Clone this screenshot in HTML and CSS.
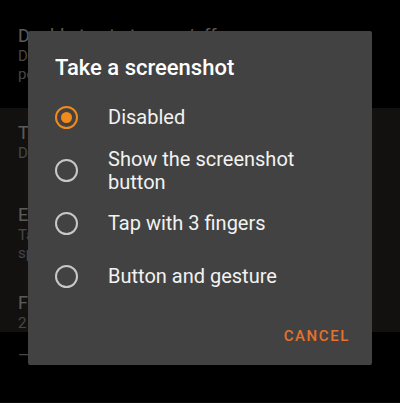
FILE: index.html
```html
<!DOCTYPE html>
<html lang="en">
<head>
    <meta charset="UTF-8">
    <meta name="viewport" content="width=device-width, initial-scale=1.0">
    <title>Take a screenshot</title>
    <link rel="stylesheet" href="styles.css">
</head>
<body>
    <div class="screen">
        <div class="setting setting-top">
            <div class="setting-title">Double-tap to turn on/off</div>
            <div class="setting-sub">Double-tap</div>
            <div class="setting-sub">persistently</div>
        </div>

        <div class="group">
            <div class="setting">
                <div class="setting-title">Take a screenshot</div>
                <div class="setting-sub">Disabled</div>
            </div>
            <div class="setting setting-tall">
                <div class="setting-title">Edge gestures</div>
                <div class="setting-sub">Tap and slide</div>
                <div class="setting-sub">special actions</div>
            </div>
            <div class="setting">
                <div class="setting-title">Floating ball</div>
                <div class="setting-sub">2 actions</div>
            </div>
        </div>

        <div class="setting setting-last">
            <div class="setting-sub">—</div>
        </div>
    </div>

    <div class="scrim"></div>

    <div class="dialog">
        <h2>Take a screenshot</h2>
        <div class="options">
            <label class="option">
                <span class="radio checked"></span>
                <span class="option-text">Disabled</span>
            </label>
            <label class="option">
                <span class="radio"></span>
                <span class="option-text">Show the screenshot button</span>
            </label>
            <label class="option">
                <span class="radio"></span>
                <span class="option-text">Tap with 3 fingers</span>
            </label>
            <label class="option">
                <span class="radio"></span>
                <span class="option-text">Button and gesture</span>
            </label>
        </div>
        <div class="actions">
            <button class="btn-cancel">CANCEL</button>
        </div>
    </div>
</body>
</html>
```

FILE: styles.css
```css
body {
    margin: 0;
    padding: 0;
    background-color: #000;
    font-family: Roboto, "Noto Sans", sans-serif;
    overflow: hidden;
}
.screen {
    height: 403px;
    border-bottom: 1px solid #1c1c1c;
    box-sizing: border-box;
}
.setting {
    padding: 14px 0 0 18px;
    height: 82px;
    box-sizing: border-box;
    overflow: hidden;
    white-space: nowrap;
}
.setting-top {
    padding-top: 25px;
    height: 108px;
}
.setting-tall {
    height: 88px;
}
.setting-title {
    color: #e2e2e2;
    font-size: 18px;
    line-height: 22px;
}
.setting-sub {
    color: #b0b0b0;
    font-size: 15px;
    line-height: 18px;
}
.group {
    background-color: #2f2c2a;
    height: 224px;
}
.setting-last {
    padding-top: 14px;
    height: 60px;
}
.scrim {
    position: absolute;
    inset: 0;
    background: rgba(0, 0, 0, 0.6);
}
.dialog {
    position: absolute;
    left: 28px;
    top: 31px;
    width: 344px;
    height: 334px;
    box-sizing: border-box;
    background-color: #424242;
    border-radius: 2px;
    padding: 24px 22px 0 27px;
    display: flex;
    flex-direction: column;
}
.dialog h2 {
    margin: 0;
    color: #fff;
    font-size: 22px;
    font-weight: 500;
    line-height: 26px;
    padding-bottom: 10px;
}
.options {
    display: flex;
    flex-direction: column;
}
.option {
    display: flex;
    align-items: center;
    gap: 30px;
    min-height: 53px;
}
.radio {
    flex: none;
    width: 23px;
    height: 23px;
    box-sizing: border-box;
    border: 2px solid #c8c8c8;
    border-radius: 50%;
    display: flex;
    align-items: center;
    justify-content: center;
}
.radio.checked {
    border: 2.5px solid #f08a1c;
}
.radio.checked::after {
    content: "";
    width: 11px;
    height: 11px;
    border-radius: 50%;
    background: #f08a1c;
}
.option-text {
    color: #f2f2f2;
    font-size: 20px;
    line-height: 23px;
}
.actions {
    display: flex;
    justify-content: flex-end;
    margin-top: 24px;
}
.btn-cancel {
    background: none;
    border: none;
    padding: 0;
    color: #e8712c;
    font-family: Roboto, "Noto Sans", sans-serif;
    font-size: 15px;
    font-weight: 500;
    letter-spacing: 1.6px;
    cursor: pointer;
}
```
